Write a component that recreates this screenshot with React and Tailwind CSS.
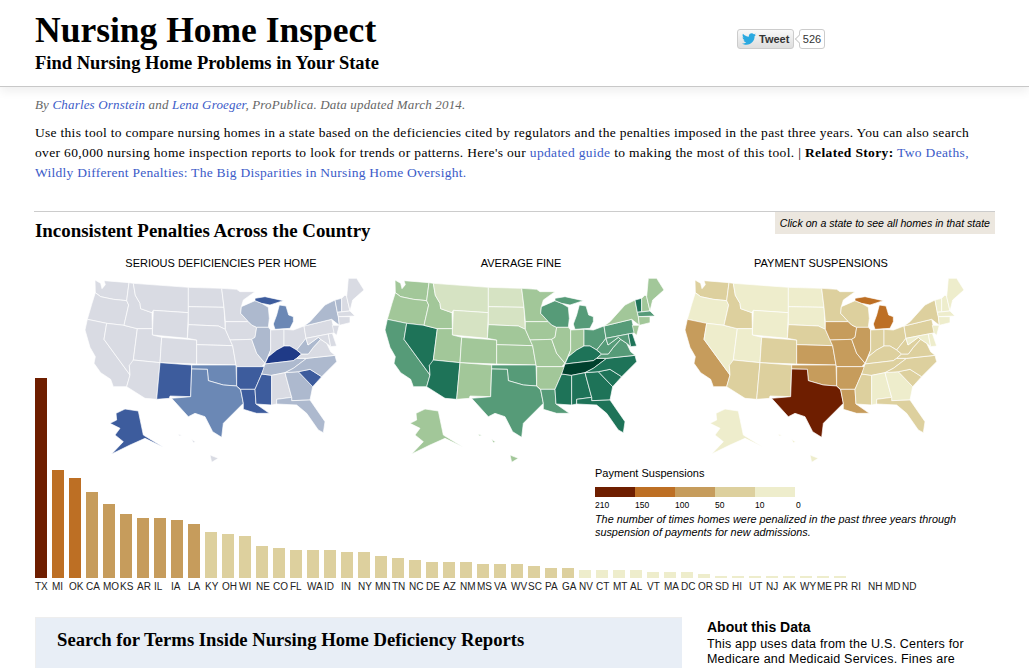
import { FaTwitter } from 'react-icons/fa'

// polygons share one 900x660 box, all three maps reuse them
const SHAPES = {
  WA: '45,90 62,100 66,116 76,104 72,92 147,98 140,152 100,148 62,140 46,128',
  OR: '46,128 62,140 100,148 140,152 146,165 132,226 80,220 22,208 36,160',
  CA: '22,208 80,220 72,268 150,375 140,410 100,410 92,388 62,368 42,340 46,320 30,292 15,240',
  NV: '80,220 132,226 172,236 160,330 155,346 148,346 150,375 72,268',
  ID: '147,98 160,100 166,136 180,160 182,176 216,188 217,236 172,236 132,226 146,165 140,152',
  MT: '160,100 325,112 325,188 220,181 216,188 182,176 180,160 166,136',
  WY: '220,181 325,188 322,265 217,255',
  UT: '172,236 217,236 217,255 245,262 240,338 160,330',
  CO: '245,262 350,270 350,342 240,338',
  AZ: '148,346 160,330 240,338 230,448 195,445 140,410 150,375',
  NM: '240,338 335,345 332,440 270,438 268,445 230,448',
  ND: '325,112 425,115 432,172 325,170',
  SD: '325,170 432,172 436,238 415,228 325,224',
  NE: '325,224 415,228 436,238 458,287 350,284 350,270 322,265',
  KS: '350,284 458,287 468,345 350,342',
  OK: '335,345 468,345 470,408 430,405 385,392 382,358 335,357',
  TX: '335,357 382,358 385,392 430,405 470,408 482,420 490,460 430,520 425,562 398,545 375,500 345,490 325,500 275,445 332,440',
  MN: '425,115 470,118 480,125 525,125 490,150 484,170 482,190 505,215 436,215 432,172',
  IA: '436,215 505,215 515,225 530,232 525,262 515,268 450,270 436,238',
  MO: '450,270 515,268 530,310 555,340 545,350 470,350 468,345 458,287',
  AR: '470,350 555,350 545,372 535,395 525,418 482,418 470,408',
  LA: '482,418 525,418 528,462 568,490 530,490 490,478 490,460',
  MS: '545,372 575,376 575,465 528,462 525,418 535,395',
  WI: '484,170 525,152 545,160 565,172 568,205 565,232 530,232 515,225 505,215 482,190',
  MIU: '525,145 555,140 610,152 570,165 545,160 525,152',
  MIL: '598,165 618,168 626,195 640,200 640,215 630,235 585,238 580,222 590,195',
  IL: '530,232 565,232 572,240 572,300 555,340 530,310 515,268 525,262',
  IN: '572,240 612,238 612,288 590,300 565,320 572,300',
  OH: '612,238 640,240 672,228 678,265 650,300 630,288 612,288',
  KY: '555,342 565,320 590,300 612,288 630,288 650,300 665,312 650,325 640,332',
  TN: '545,372 555,342 640,332 650,325 680,325 640,355 615,368 575,376',
  AL: '575,376 615,368 635,442 590,448 590,462 575,465',
  GA: '615,368 655,365 698,410 690,450 635,452 635,442',
  FL: '590,448 635,442 635,452 690,450 735,515 730,548 715,540 680,490 650,465 590,462',
  SC: '655,365 690,358 725,380 698,410',
  NC: '640,355 680,325 765,316 770,335 725,380 690,358 655,365 615,368',
  VA: '650,325 665,312 685,312 700,292 722,268 740,280 752,305 765,316 680,325',
  WV: '650,300 678,265 684,285 715,262 722,268 700,292 685,312 665,312',
  PA: '672,228 755,208 765,248 678,265',
  NY: '690,215 735,165 765,150 772,187 775,200 778,226 755,208 672,228',
  NJ: '757,226 778,226 770,256 762,248',
  MD: '678,265 745,252 752,290 740,280 722,268 715,262 684,285',
  DE: '745,252 757,250 770,288 752,290',
  VT: '765,150 785,145 785,185 772,187',
  NH: '785,145 795,135 800,140 810,183 785,185',
  ME: '805,85 830,85 852,120 818,150 810,183 800,140',
  MA: '772,187 810,183 825,198 775,200',
  CT: '775,200 810,200 810,218 778,226',
  AK: '108,490 135,477 175,483 190,555 250,592 195,565 150,585 95,612 130,575 105,555 120,535 90,520 110,510',
  HI1: '390,615 415,625 395,637',
  HI2: '335,568 346,575 340,578',
  HI3: '295,553 306,556 298,558',
}

const MAPS = [
  {
    title: 'SERIOUS DEFICIENCIES PER HOME',
    base: '#d9dbe3',
    ramp: {
      KY: '#1f3a87',
      NM: '#3d5c9d', AR: '#3d5c9d', LA: '#3d5c9d', MS: '#3d5c9d', AK: '#3d5c9d', SC: '#3d5c9d', MIU: '#3d5c9d',
      TX: '#6b88b5', OK: '#6b88b5', MIL: '#6b88b5',
      WI: '#adb9ce', IL: '#adb9ce', NY: '#adb9ce', VT: '#adb9ce', WV: '#adb9ce', GA: '#adb9ce', FL: '#adb9ce', NC: '#adb9ce', TN: '#adb9ce',
    },
  },
  {
    title: 'AVERAGE FINE',
    base: '#a2c799',
    ramp: {
      TN: '#00402d',
      NV: '#1e7358', AZ: '#1e7358', VT: '#1e7358', KY: '#1e7358', NC: '#1e7358', SC: '#1e7358', GA: '#1e7358', AL: '#1e7358', MS: '#1e7358', FL: '#1e7358', DE: '#1e7358',
      CA: '#569b78', TX: '#569b78', OK: '#569b78', WI: '#569b78', MIU: '#569b78', MIL: '#569b78', OH: '#569b78', PA: '#569b78', WV: '#569b78', VA: '#569b78', MA: '#569b78', MD: '#569b78', LA: '#569b78',
      MT: '#d6e3c3', WY: '#d6e3c3', ND: '#d6e3c3', SD: '#d6e3c3',
    },
  },
  {
    title: 'PAYMENT SUSPENSIONS',
    base: '#eeedcc',
    ramp: {
      TX: '#6e1e00',
      MIU: '#bd6f24', MIL: '#bd6f24',
      CA: '#c69c5c', KS: '#c69c5c', OK: '#c69c5c', IA: '#c69c5c', IL: '#c69c5c', MO: '#c69c5c', AR: '#c69c5c', LA: '#c69c5c',
      WA: '#ddd09e', ID: '#ddd09e', AZ: '#ddd09e', NM: '#ddd09e', CO: '#ddd09e', NE: '#ddd09e', MN: '#ddd09e', WI: '#ddd09e', NY: '#ddd09e', PA: '#ddd09e', IN: '#ddd09e', OH: '#ddd09e', WV: '#ddd09e', VA: '#ddd09e', KY: '#ddd09e', TN: '#ddd09e', NC: '#ddd09e', SC: '#ddd09e', MS: '#ddd09e', FL: '#ddd09e',
    },
  },
]

const BARS = [
  ['TX', 200], ['MI', 108], ['OK', 100], ['CA', 86], ['MO', 74], ['KS', 64], ['AR', 60], ['IL', 60], ['IA', 58], ['LA', 54],
  ['KY', 46], ['OH', 44], ['WI', 42], ['NE', 32], ['CO', 30], ['FL', 28], ['WA', 28], ['ID', 28], ['IN', 26], ['NY', 26],
  ['MN', 22], ['TN', 20], ['NC', 18], ['DE', 16], ['AZ', 16], ['NM', 16], ['MS', 14], ['VA', 14], ['WV', 14], ['SC', 12],
  ['PA', 10], ['GA', 10], ['NV', 8], ['CT', 8], ['MT', 8], ['AL', 8], ['VT', 6], ['MA', 6], ['DC', 6], ['OR', 4],
  ['SD', 2], ['HI', 2], ['UT', 2], ['NJ', 2], ['AK', 2], ['WY', 2], ['ME', 2], ['PR', 2], ['RI', 0], ['NH', 0], ['MD', 0], ['ND', 0],
]

const LEGEND = [
  ['#6e1e00', '210'],
  ['#bd6f24', '150'],
  ['#c69c5c', '100'],
  ['#ddd09e', '50'],
  ['#eeedcc', '10'],
]

function barColor(h) {
  if (h >= 200) return '#6e1e00'
  if (h >= 100) return '#bd6f24'
  if (h >= 54) return '#c69c5c'
  if (h >= 10) return '#ddd09e'
  return '#eeedcc'
}

function UsMap({ map }) {
  return (
    <div className="w-[300px] shrink-0">
      <p className="w-[282px] text-center text-[11px] leading-[13px] text-black">{map.title}</p>
      <svg viewBox="0 75 900 585" className="mt-[5px] block w-[300px] h-[195px]">
        {Object.entries(SHAPES).map(([id, pts]) => (
          <polygon key={id} points={pts} fill={map.ramp[id] || map.base} stroke="#fff" strokeWidth="2" strokeLinejoin="round" />
        ))}
      </svg>
    </div>
  )
}

export default function App() {
  return (
    <div className="h-[668px] overflow-hidden bg-white text-black font-['Liberation_Sans',sans-serif]">
      {/* Header */}
      <header className="h-[87px] px-[35px] flex items-start border-b border-[#c8c8c8] shadow-[0_4px_10px_rgba(0,0,0,0.07)]">
        <div className="w-[702px] font-['Liberation_Serif',serif] font-bold">
          <h1 className="pt-[10px] text-[35.5px] leading-[40px]">Nursing Home Inspect</h1>
          <h2 className="mt-[2px] text-[18.5px] leading-[22px]">Find Nursing Home Problems in Your State</h2>
        </div>
        <div className="mt-[29px] flex items-center">
          <div className="h-[20px] w-[57px] flex items-center gap-[3px] pl-[4px] rounded-[3px] border border-[#ccc] bg-gradient-to-b from-[#f8f8f8] to-[#dedede] text-[11px] font-bold text-[#333]">
            <FaTwitter className="text-[#2aa9e0] text-[14px]" />
            <span>Tweet</span>
          </div>
          <div className="relative ml-[5px] h-[20px] w-[26px] flex items-center justify-center rounded-[3px] border border-[#ccc] bg-white text-[11px] text-[#333]">
            526
            <span className="absolute left-[-4px] top-[6px] h-[6px] w-[6px] rotate-45 border-b border-l border-[#ccc] bg-white" />
          </div>
        </div>
      </header>

      {/* Intro */}
      <section className="px-[35px] font-['Liberation_Serif',serif]">
        <p className="mt-[10px] text-[13px] leading-[16px] italic text-[#666] tracking-[0.17px]">
          By <a className="text-[#3b5bc8]">Charles Ornstein</a> and <a className="text-[#3b5bc8]">Lena Groeger</a>, ProPublica. Data updated March 2014.
        </p>
        <div className="mt-[10px] text-[13.5px] leading-[20px] whitespace-nowrap">
          <p className="tracking-[0.29px]">Use this tool to compare nursing homes in a state based on the deficiencies cited by regulators and the penalties imposed in the past three years. You can also search</p>
          <p className="tracking-[0.35px]">over 60,000 nursing home inspection reports to look for trends or patterns. Here's our <a className="text-[#3b5bc8]">updated guide</a> to making the most of this tool. | <b>Related Story:</b> <a className="text-[#3b5bc8]">Two Deaths,</a></p>
          <p className="tracking-[0.27px] text-[#3b5bc8]">Wildly Different Penalties: The Big Disparities in Nursing Home Oversight.</p>
        </div>
      </section>

      {/* Maps and chart */}
      <section className="relative mx-[34px] mt-[28px] border-t border-[#ccc]">
        <div className="flex items-start justify-between">
          <h3 className="mt-[8px] ml-px font-['Liberation_Serif',serif] font-bold text-[18.9px] leading-[22px]">Inconsistent Penalties Across the Country</h3>
          <p className="h-[22px] px-[5px] leading-[22px] bg-[#ece7df] text-[10.6px] italic">Click on a state to see all homes in that state</p>
        </div>
        <div className="flex pl-[46px] mt-[15px]">
          {MAPS.map(map => <UsMap key={map.title} map={map} />)}
        </div>

        <div className="ml-px mt-[-92px] flex items-end h-[200px]">
          {BARS.map(([state, h]) => (
            <div key={state} className="w-[17px] shrink-0">
              <div className="w-[12px]" style={{ height: h, backgroundColor: barColor(h) }} />
            </div>
          ))}
        </div>
        <div className="ml-px flex mt-[3px]">
          {BARS.map(([state]) => (
            <span key={state} className="w-[17px] shrink-0 text-[10px] leading-[12px] whitespace-nowrap text-[#222]">{state}</span>
          ))}
        </div>

        {/* Legend sits in the empty corner above the short bars */}
        <div className="absolute left-[561px] top-[254px] w-[370px]">
          <p className="text-[11px] leading-[14px]">Payment Suspensions</p>
          <div className="mt-[7px] flex">
            {LEGEND.map(([color, label]) => (
              <div key={label} className="w-[40px]">
                <div className="h-[10px]" style={{ backgroundColor: color }} />
                <p className="mt-[3px] text-[8.5px] leading-[10px]">{label}</p>
              </div>
            ))}
            <p className="mt-[13px] ml-[1px] text-[8.5px] leading-[10px]">0</p>
          </div>
          <p className="mt-[3px] text-[10.85px] leading-[13px] italic">
            The number of times homes were penalized in the past three years through suspension of payments for new admissions.
          </p>
        </div>
      </section>

      {/* Lower columns */}
      <section className="mt-[24px] pl-[35px] flex items-start">
        <div className="w-[647px] h-[200px] bg-[#e8eef6] pt-[10px] pl-[21px] border-t border-l border-[#eeeeee]">
          <h3 className="font-['Liberation_Serif',serif] font-bold text-[18.66px] leading-[24px]">Search for Terms Inside Nursing Home Deficiency Reports</h3>
          <p className="mt-[13px] text-[13px] leading-[16px] font-['Liberation_Serif',serif]">Add words to search below</p>
        </div>
        <div className="ml-[25px] w-[275px] pt-[2px]">
          <h4 className="text-[14px] leading-[16px] font-bold">About this Data</h4>
          <p className="mt-[2px] text-[12.5px] leading-[15px] tracking-[0.2px]">
            This app uses data from the U.S. Centers for Medicare and Medicaid Services. Fines are
          </p>
        </div>
      </section>
    </div>
  )
}
